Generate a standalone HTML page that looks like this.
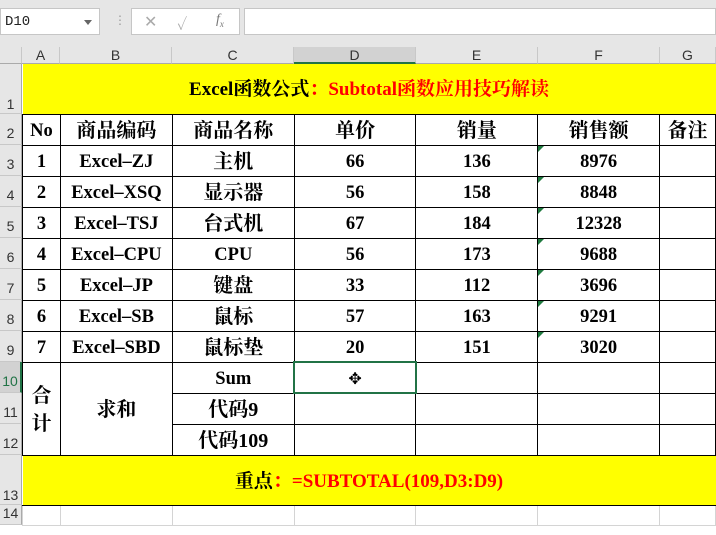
<!DOCTYPE html>
<html><head><meta charset="utf-8"><style>
*{margin:0;padding:0;box-sizing:border-box}
body{width:716px;height:514px;overflow:hidden;background:#fff;font-family:"Liberation Serif","Noto Serif CJK SC",serif;position:relative}
.top{position:absolute;left:0;top:0;width:716px;height:47px;background:#e6e6e6}
.nb{position:absolute;left:0;top:8px;width:100px;height:27px;background:#fff;border:1px solid #c6c6c6;font:14px "Liberation Mono",monospace;padding:5px 4px;color:#222}
.nb:after{content:"";position:absolute;right:7px;top:11px;border:4px solid transparent;border-top:5px solid #666}
.fx{position:absolute;left:131px;top:8px;width:109px;height:27px;background:#fff;border:1px solid #c6c6c6;color:#aaa;font-size:16px}
.fi{position:absolute;left:244px;top:8px;width:472px;height:27px;background:#fff;border:1px solid #c6c6c6}
.colh{position:absolute;top:47px;height:17px;background:#e6e6e6;border-right:1px solid #c8c8c8;border-bottom:1px solid #aaa;font:14px "Liberation Sans",sans-serif;color:#333;text-align:center;line-height:16px}
.rowh{position:absolute;left:0;width:22px;background:#e6e6e6;border-bottom:1px solid #c8c8c8;border-right:1px solid #aaa;font:14px "Liberation Sans",sans-serif;color:#333;text-align:center}
table{position:absolute;left:22px;top:64px;border-collapse:collapse;table-layout:fixed}
td{border:1px solid #000;text-align:center;font-weight:bold;font-size:18.5px;padding:3px 0 0 0;white-space:nowrap;position:relative;line-height:20px}
.c{font-size:20px}
.y td{background:#ff0;border-left:none;border-right:none;font-size:19px}
.r{color:#f00}
.tri:before{content:"";position:absolute;left:0;top:0;border-top:6px solid #1f7a3f;border-right:6px solid transparent}
.g td{border:1px solid #d4d4d4}
</style></head><body>
<div class="top">
<div class="nb">D10</div>
<div style="position:absolute;left:114px;top:13px;color:#999;font-size:12px">⋮</div>
<div class="fx"><span style="position:absolute;left:12px;top:3px">✕</span><span style="position:absolute;left:45px;top:3px">✓</span><span style="position:absolute;left:84px;top:3px;font-style:italic;color:#777;font-size:14px">f<sub style="font-size:9px">x</sub></span></div>
<div class="fi"></div>
</div>
<div class="colh" style="left:0;width:22px"></div>
<div class="colh" style="left:22px;width:38px">A</div>
<div class="colh" style="left:60px;width:112px">B</div>
<div class="colh" style="left:172px;width:122px">C</div>
<div class="colh" style="left:294px;width:122px;background:#d2d2d2;border-bottom:2px solid #217346">D</div>
<div class="colh" style="left:416px;width:122px">E</div>
<div class="colh" style="left:538px;width:122px">F</div>
<div class="colh" style="left:660px;width:56px">G</div>
<div class="rowh" style="top:64px;height:50px;line-height:80px">1</div>
<div class="rowh" style="top:114px;height:31px;line-height:38px">2</div>
<div class="rowh" style="top:145px;height:31px;line-height:38px">3</div>
<div class="rowh" style="top:176px;height:31px;line-height:38px">4</div>
<div class="rowh" style="top:207px;height:31px;line-height:38px">5</div>
<div class="rowh" style="top:238px;height:31px;line-height:38px">6</div>
<div class="rowh" style="top:269px;height:31px;line-height:38px">7</div>
<div class="rowh" style="top:300px;height:31px;line-height:38px">8</div>
<div class="rowh" style="top:331px;height:31px;line-height:38px">9</div>
<div class="rowh" style="top:362px;height:31px;line-height:38px;background:#d2d2d2;color:#217346;border-right:2px solid #217346">10</div>
<div class="rowh" style="top:393px;height:31px;line-height:38px">11</div>
<div class="rowh" style="top:424px;height:31px;line-height:38px">12</div>
<div class="rowh" style="top:455px;height:50px;line-height:80px">13</div>
<div class="rowh" style="top:505px;height:20px">14</div>
<table>
<colgroup><col style="width:38px"><col style="width:112px"><col style="width:122px"><col style="width:122px"><col style="width:122px"><col style="width:122px"><col style="width:56px"></colgroup>
<tr class="y" style="height:50px"><td colspan="7" style="border-top:none">Excel函数公式<span class="r">：Subtotal函数应用技巧解读</span></td></tr>
<tr style="height:31px"><td>No</td><td class="c">商品编码</td><td class="c">商品名称</td><td class="c">单价</td><td class="c">销量</td><td class="c">销售额</td><td class="c">备注</td></tr>
<tr style="height:31px"><td>1</td><td>Excel–ZJ</td><td class="c">主机</td><td>66</td><td>136</td><td class="tri">8976</td><td></td></tr>
<tr style="height:31px"><td>2</td><td>Excel–XSQ</td><td class="c">显示器</td><td>56</td><td>158</td><td class="tri">8848</td><td></td></tr>
<tr style="height:31px"><td>3</td><td>Excel–TSJ</td><td class="c">台式机</td><td>67</td><td>184</td><td class="tri">12328</td><td></td></tr>
<tr style="height:31px"><td>4</td><td>Excel–CPU</td><td>CPU</td><td>56</td><td>173</td><td class="tri">9688</td><td></td></tr>
<tr style="height:31px"><td>5</td><td>Excel–JP</td><td class="c">键盘</td><td>33</td><td>112</td><td class="tri">3696</td><td></td></tr>
<tr style="height:31px"><td>6</td><td>Excel–SB</td><td class="c">鼠标</td><td>57</td><td>163</td><td class="tri">9291</td><td></td></tr>
<tr style="height:31px"><td>7</td><td>Excel–SBD</td><td class="c">鼠标垫</td><td>20</td><td>151</td><td class="tri">3020</td><td></td></tr>
<tr style="height:31px"><td rowspan="3" class="c" style="white-space:normal;line-height:28px">合<br>计</td><td rowspan="3" class="c">求和</td><td>Sum</td><td style="outline:2px solid #217346;outline-offset:-1px"><span style="font-size:16px;font-weight:normal">✥</span></td><td></td><td></td><td></td></tr>
<tr style="height:31px"><td class="c">代码9</td><td></td><td></td><td></td><td></td></tr>
<tr style="height:31px"><td class="c">代码109</td><td></td><td></td><td></td><td></td></tr>
<tr class="y" style="height:50px"><td colspan="7">重点<span class="r">：=SUBTOTAL(109,D3:D9)</span></td></tr>
<tr class="g" style="height:20px"><td style="padding:0"></td><td style="padding:0"></td><td style="padding:0"></td><td style="padding:0"></td><td style="padding:0"></td><td style="padding:0"></td><td style="padding:0"></td></tr>
</table>
</body></html>
